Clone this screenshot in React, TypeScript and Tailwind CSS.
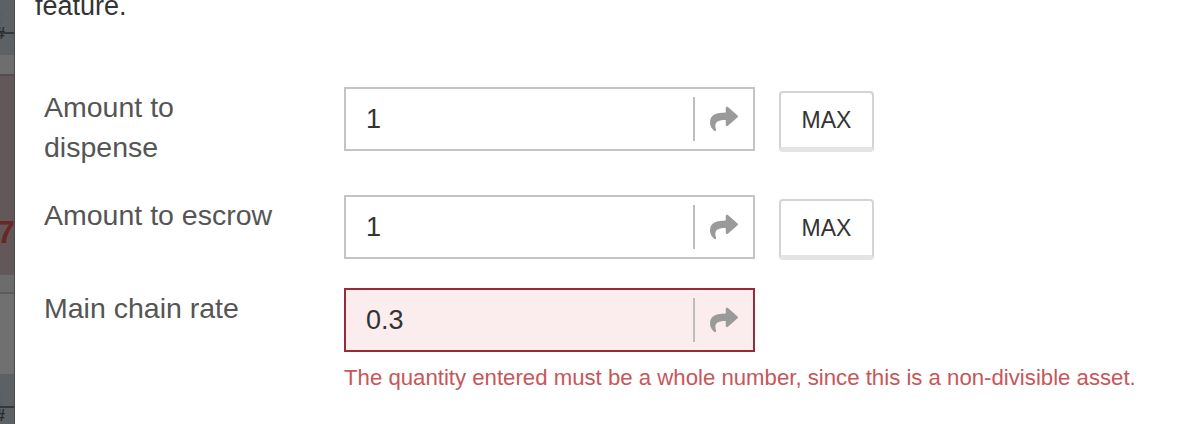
import { FaShare } from 'react-icons/fa';

type Row = { label: string; value: string; max?: boolean; error?: string };

const rows: Row[] = [
  { label: 'Amount to dispense', value: '1', max: true },
  { label: 'Amount to escrow', value: '1', max: true },
  {
    label: 'Main chain rate',
    value: '0.3',
    error: 'The quantity entered must be a whole number, since this is a non-divisible asset.',
  },
];

function Backdrop() {
  return (
    <div className="w-[15px] shrink-0 flex flex-col overflow-hidden border-r border-[#4a4a4a] text-[#2a2a2a]">
      <div className="h-[55px] bg-[#5b6165] relative">
        <span className="absolute left-[-4px] top-[10px] text-[16px] font-bold leading-none">; #</span>
        <div className="absolute left-0 right-0 top-[32px] h-[2px] bg-[#33383b]" />
      </div>
      <div className="h-[21px] bg-[#6e6e6e] border-b-2 border-[#574c4d]" />
      <div className="h-[198px] bg-[#625859] relative">
        <span className="absolute left-[-3px] top-[140px] text-[32px] font-bold leading-none text-[#6b2626]">7</span>
      </div>
      <div className="h-[20px] bg-[#6c6c6c] border-t border-b-2 border-[#5c5c5c]" />
      <div className="h-[80px] bg-[#707070]" />
      <div className="flex-1 bg-[#5b6165] relative">
        <span className="absolute left-[-4px] top-[18px] text-[16px] font-bold leading-none">; #</span>
        <div className="absolute left-0 right-0 top-[32px] h-[2px] bg-[#33383b]" />
      </div>
    </div>
  );
}

function Field({ row }: { row: Row }) {
  const bad = !!row.error;
  return (
    <div className="flex">
      <div className="w-[300px] shrink-0">
        <div className="w-[240px] text-[28.5px] leading-[40px] text-[#555]">{row.label}</div>
      </div>
      <div>
        <div className="flex items-start gap-6">
          <div
            className={
              bad
                ? 'w-[411px] h-[64px] flex items-center border-2 border-[#9b2a38] bg-[#fbeced]'
                : 'w-[411px] h-[64px] flex items-center border-2 border-[#c4c4c4] bg-white'
            }
          >
            <span className="flex-1 pl-[20px] text-[27px] text-[#333]">{row.value}</span>
            <div className="w-[2px] h-[44px] bg-[#bdbdbd]" />
            <div className="w-[58px] flex justify-center text-[#9a9a9a]">
              <FaShare size={28} />
            </div>
          </div>
          {row.max && (
            <button className="mt-1 w-[95px] h-[61px] rounded-[4px] border-2 border-[#d4d4d4] border-b-[5px] border-b-[#e4e4e4] bg-white text-[23px] text-[#333]">
              MAX
            </button>
          )}
        </div>
        {bad && <div className="mt-[12px] text-[22.2px] leading-[28px] text-[#c7565a] whitespace-nowrap">{row.error}</div>}
      </div>
    </div>
  );
}

export default function App() {
  return (
    <div className="w-[1194px] h-[424px] flex bg-white overflow-hidden font-['Liberation_Sans',Arial,sans-serif]">
      <Backdrop />
      <div className="flex-1 relative">
        <div className="absolute left-[20px] top-[-10px] text-[27px] leading-[32px] text-[#333]">feature.</div>
        <div className="pt-[87px] pl-[29px] flex flex-col gap-7">
          {rows.map((r) => (
            <Field key={r.label} row={r} />
          ))}
        </div>
      </div>
    </div>
  );
}
